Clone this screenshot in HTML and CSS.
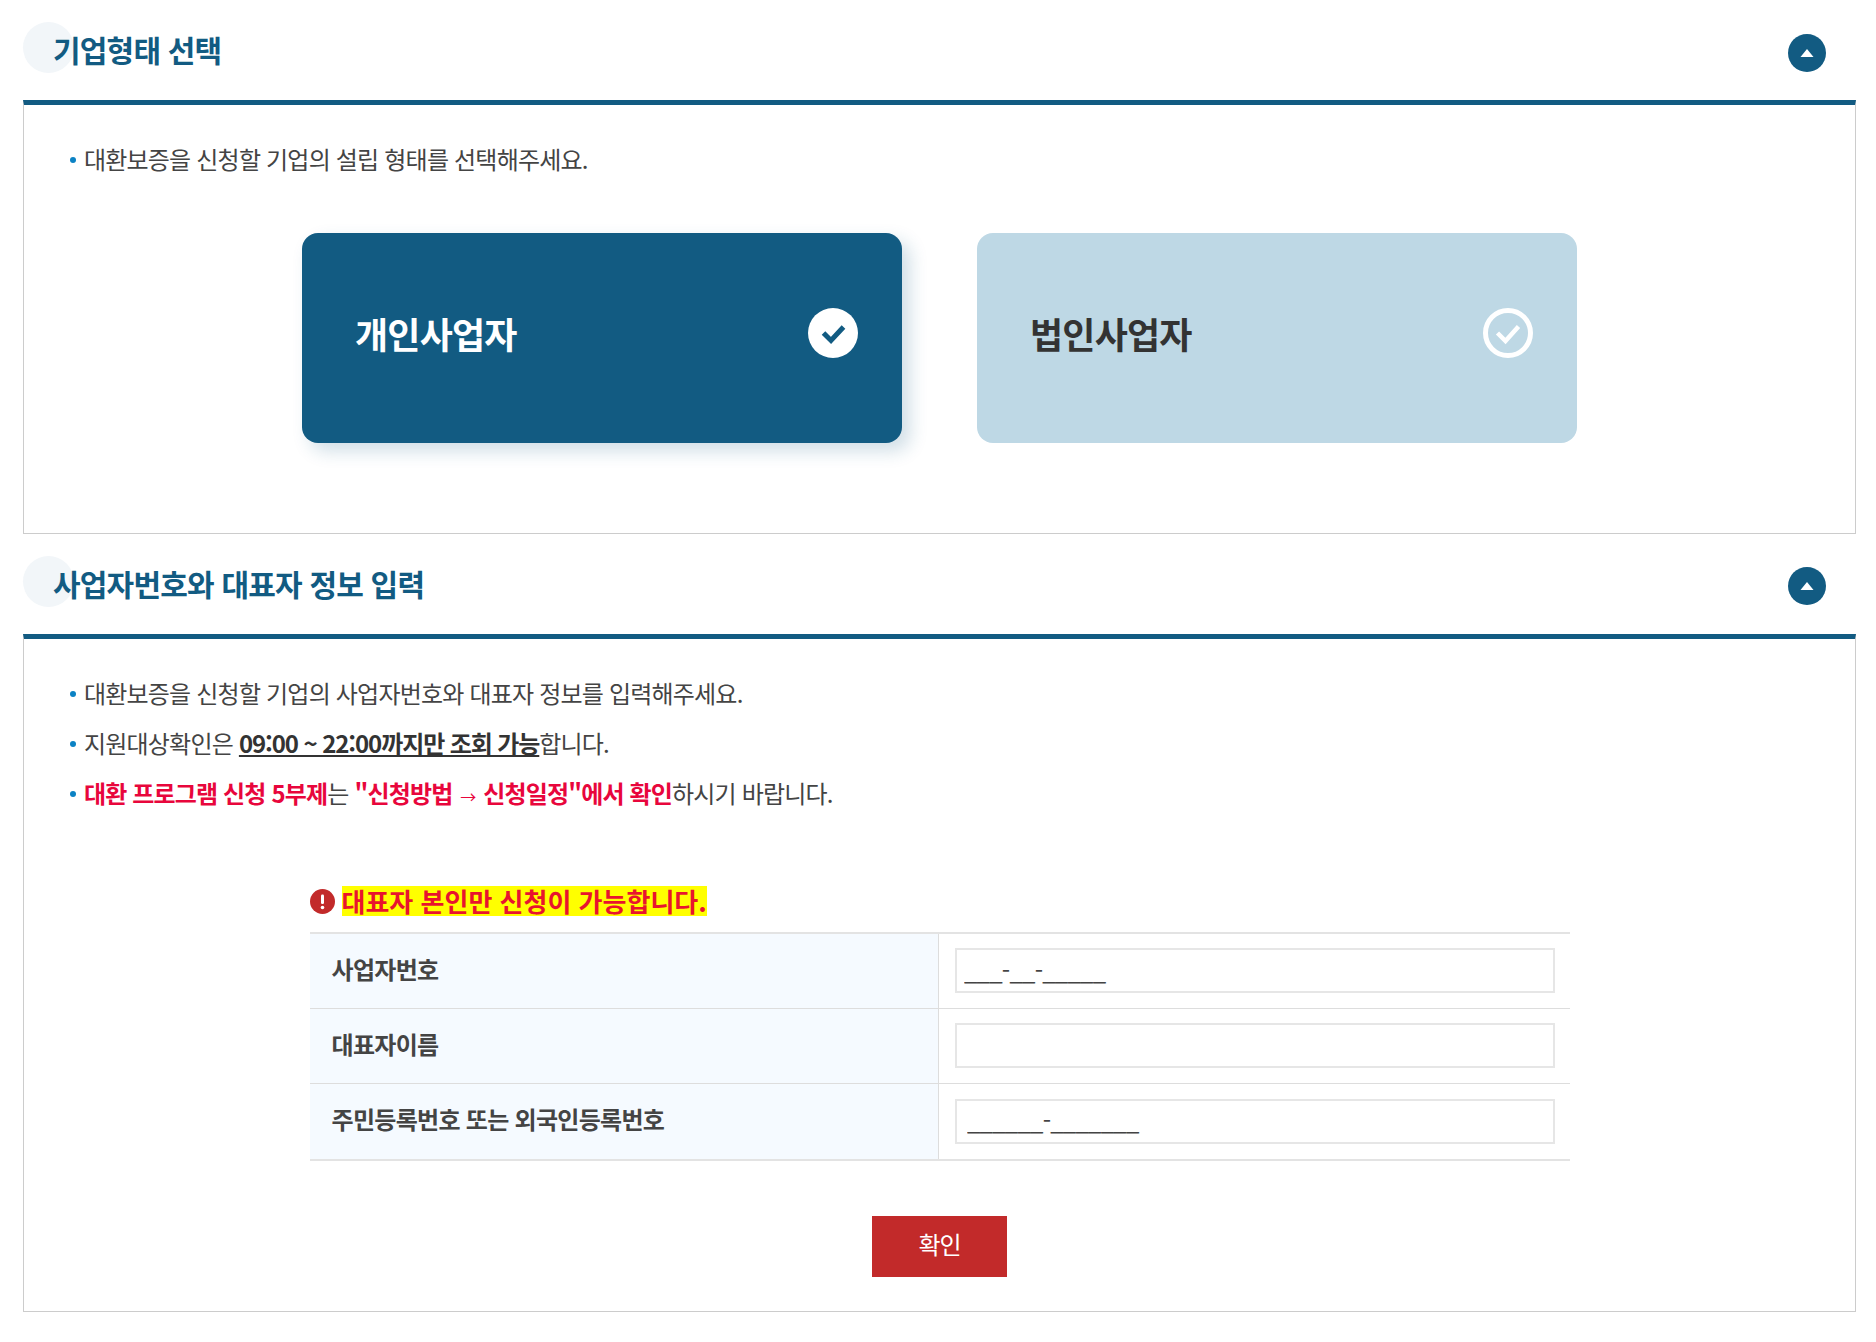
FILE: index.html
```html
<!DOCTYPE html>
<html lang="ko">
    <head>
        <title>대환보증 신청</title>
        <meta name="viewport" content="width=device-width, initial-scale=1.0">
        <link rel="stylesheet" href="styles.css">
    </head>
    <body>
        <div class="wrap">
            <section class="section">
                <div class="section-head">
                    <h3 class="section-title">기업형태 선택</h3>
                    <button class="toggle" type="button" aria-label="접기">
                        <svg width="38" height="38" viewBox="0 0 38 38"><circle cx="19" cy="19" r="19" fill="#125b82"/><path d="M19 15l6.500 8h-13z" fill="#fff"/></svg>
                    </button>
                </div>
                <div class="panel panel-type">
                    <ul class="notes">
                        <li>대환보증을 신청할 기업의 설립 형태를 선택해주세요.</li>
                    </ul>
                    <div class="type-cards">
                        <div class="type-card selected">
                            <span>개인사업자</span>
                            <svg width="50" height="50" viewBox="0 0 50 50"><circle cx="25" cy="25" r="25" fill="#fff"/><path d="M15.500 25l7.500 7.500 12.500-13.500" fill="none" stroke="#125b82" stroke-width="5"/></svg>
                        </div>
                        <div class="type-card">
                            <span>법인사업자</span>
                            <svg width="50" height="50" viewBox="0 0 50 50"><circle cx="25" cy="25" r="22.500" fill="none" stroke="#fff" stroke-width="5"/><path d="M14.500 25l8 8 13-14.500" fill="none" stroke="#fff" stroke-width="4.500"/></svg>
                        </div>
                    </div>
                </div>
            </section>

            <section class="section">
                <div class="section-head">
                    <h3 class="section-title">사업자번호와 대표자 정보 입력</h3>
                    <button class="toggle" type="button" aria-label="접기">
                        <svg width="38" height="38" viewBox="0 0 38 38"><circle cx="19" cy="19" r="19" fill="#125b82"/><path d="M19 15l6.500 8h-13z" fill="#fff"/></svg>
                    </button>
                </div>
                <div class="panel panel-info">
                    <ul class="notes">
                        <li>대환보증을 신청할 기업의 사업자번호와 대표자 정보를 입력해주세요.</li>
                        <li>지원대상확인은 <b class="under">09:00 ~ 22:00까지만 조회 가능</b>합니다.</li>
                        <li><b class="red">대환 프로그램 신청 5부제</b>는 <b class="red">"신청방법 <span class="arrow">→</span> 신청일정"에서 확인</b>하시기 바랍니다.</li>
                    </ul>
                    <div class="form-box">
                        <p class="warn">
                            <svg width="25" height="25" viewBox="0 0 25 25"><circle cx="12.500" cy="12.500" r="12.500" fill="#c22a2a"/><rect x="11" y="5.500" width="3" height="9.500" rx="1.200" fill="#fff"/><circle cx="12.500" cy="18.500" r="1.800" fill="#fff"/></svg>
                            <mark>대표자 본인만 신청이 가능합니다.</mark>
                        </p>
                        <table class="form-table">
                            <tr>
                                <th>사업자번호</th>
                                <td><input class="field" type="text" value="___-__-_____"></td>
                            </tr>
                            <tr>
                                <th>대표자이름</th>
                                <td><input class="field" type="text"></td>
                            </tr>
                            <tr>
                                <th>주민등록번호 또는 외국인등록번호</th>
                                <td><input class="field field-long" type="text" value="______-_______"></td>
                            </tr>
                        </table>
                        <div class="actions">
                            <button class="btn-confirm" type="button">확인</button>
                        </div>
                    </div>
                </div>
            </section>
        </div>
    </body>
</html>
```

FILE: styles.css
```css
* {
    box-sizing: border-box;
}
body {
    margin: 0;
    background: #fff;
    color: #444;
    font-family: "Noto Sans CJK KR", "Noto Sans", sans-serif;
    font-size: 24px;
    letter-spacing: -0.8px;
}
.wrap {
    padding: 0 20px 30px 23px;
}
.section-head {
    position: relative;
    display: flex;
    align-items: center;
    justify-content: space-between;
    height: 100px;
    padding: 0 30px 0 30px;
}
.section-head::before {
    content: "";
    position: absolute;
    left: 0;
    top: 22px;
    width: 51px;
    height: 51px;
    border-radius: 50%;
    background: #f2f6f9;
}
.section-title {
    position: relative;
    margin: 0;
    color: #125b82;
    font-size: 30px;
    font-weight: 700;
    line-height: 1;
    letter-spacing: -0.8px;
    transform: translateY(-1px);
}
.toggle {
    display: flex;
    padding: 0;
    border: 0;
    background: none;
    transform: translateY(3px);
}
.section + .section .toggle {
    transform: translateY(2px);
}
.panel {
    border: 1px solid #ccc;
    border-top: 5px solid #125b82;
}
.panel-type {
    padding: 29px 0 90px;
}
.panel-info {
    padding: 29px 0 34px;
}
.notes {
    margin: 0;
    padding: 0 0 0 60px;
    list-style: none;
}
.notes li {
    position: relative;
    height: 50px;
    line-height: 50px;
    white-space: nowrap;
}
.notes li::before {
    content: "";
    position: absolute;
    left: -14px;
    top: 23px;
    width: 6px;
    height: 6px;
    border-radius: 50%;
    background: #0b82c4;
}
.under {
    color: #333;
    letter-spacing: -1.1px;
    text-decoration: underline;
}
.red {
    color: #e8063c;
    letter-spacing: -0.85px;
}
.arrow {
    margin: 0 2px;
    font-size: 16px;
    font-weight: 400;
}
.type-cards {
    display: flex;
    justify-content: center;
    gap: 75px;
    margin-top: 49px;
}
.type-card {
    display: flex;
    align-items: center;
    justify-content: space-between;
    width: 600px;
    height: 210px;
    padding: 0 44px 10px 53px;
    border-radius: 16px;
    background: #bed8e5;
    color: #333;
    font-size: 36px;
    font-weight: 700;
    letter-spacing: -0.8px;
}
.type-card.selected {
    background: #125b82;
    color: #fff;
    box-shadow: 8px 8px 18px rgba(18, 91, 130, 0.2);
}
.form-box {
    width: 1260px;
    margin: 68px auto 0;
}
.warn {
    display: flex;
    align-items: center;
    gap: 7px;
    height: 30px;
    margin: 0 0 16px;
    color: #e8142e;
    font-size: 26px;
    font-weight: 700;
    letter-spacing: 0;
}
.warn mark {
    display: block;
    height: 30px;
    background: #ff0;
    color: inherit;
    line-height: 30px;
}
.form-table {
    width: 100%;
    border-collapse: collapse;
    border-top: 2px solid #e3e3e3;
    border-bottom: 2px solid #e3e3e3;
}
.form-table tr + tr {
    border-top: 1px solid #ddd;
}
.form-table th {
    width: 629px;
    height: 75px;
    padding: 0 0 4px 22px;
    border-right: 1px solid #ddd;
    background: #f5faff;
    text-align: left;
    font-weight: 700;
    font-size: 24px;
    letter-spacing: -0.7px;
}
.form-table tr:last-child th {
    height: 77px;
    padding-bottom: 6px;
}
.form-table td {
    padding: 0 15px 0 16px;
}
.field {
    display: block;
    width: 100%;
    height: 45px;
    padding: 0 7px 3px;
    border: 2px solid #e6e6e6;
    background: #fff;
    color: #444;
    font-family: inherit;
    font-size: 24px;
    letter-spacing: -0.8px;
}
.field-long {
    padding-left: 10px;
}
.actions {
    display: flex;
    justify-content: center;
    margin-top: 55px;
}
.btn-confirm {
    width: 135px;
    height: 61px;
    padding: 0 0 6px;
    border: 0;
    background: #c22a2a;
    color: #fff;
    font-family: inherit;
    font-size: 24px;
    letter-spacing: -1px;
}
```
